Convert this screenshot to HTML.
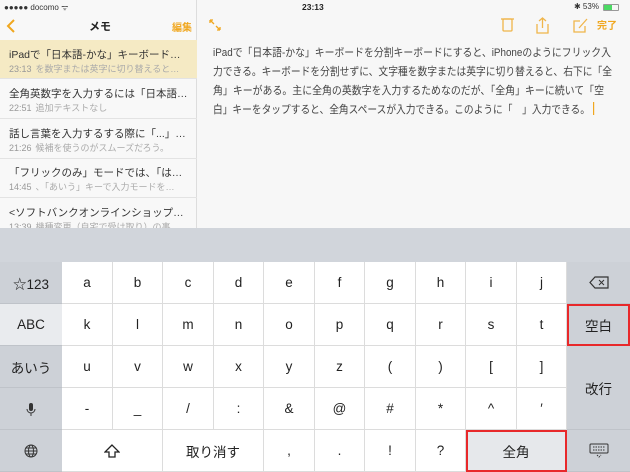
<!DOCTYPE html>
<html><head><meta charset="utf-8"><style>
*{margin:0;padding:0;box-sizing:border-box}
body{width:630px;height:472px;overflow:hidden;background:#f7f7f7;font-family:"Liberation Sans","Noto Sans CJK JP",sans-serif;position:relative;color:#222}
.abs{position:absolute}
.side{left:0;top:0;width:197px;height:228px;background:#f8f8f8;border-right:1px solid #ddd}
.item{position:absolute;left:0;width:197px;height:40px;border-bottom:1px solid #e3e3e3;padding-left:9px}
.item .t{font-size:10.5px;color:#333;position:absolute;top:7px;left:9px;white-space:nowrap}
.item .s{font-size:9px;color:#aaa;position:absolute;top:22px;left:9px;white-space:nowrap}
.item .s b{font-weight:normal;color:#999;margin-right:4px}
.kb{left:0;top:228px;width:630px;height:244px;background:#d1d5db}
.k{position:absolute;background:#fff;border-right:1px solid #dcdcdc;border-bottom:1px solid #dcdcdc;display:flex;align-items:center;justify-content:center;font-size:13.5px;color:#222}
.g{background:#cdd1d7;border-bottom:1px solid #bfc3c9;border-right:none}
.red{outline:2px solid #e8282a;outline-offset:-2px}
.o{color:#f0a71f}
</style></head><body>
<div class="abs side"></div>
<div class="abs" style="left:4px;top:2px;font-size:8px;color:#333">●●●●● docomo ᯤ</div>
<div class="abs" style="left:302px;top:2px;font-size:8.5px;font-weight:bold;color:#222">23:13</div>
<div class="abs" style="left:574px;top:2px;font-size:8px;color:#333">✱ 53%</div>
<div class="abs" style="left:603px;top:4px;width:16px;height:7px;border:1px solid #999;border-radius:1px"><div style="width:8px;height:5px;background:#4cd964"></div></div>
<svg class="abs" style="left:6px;top:18px" width="10" height="16"><path d="M8 2L2 8l6 6" fill="none" stroke="#f0a71f" stroke-width="2"/></svg>
<div class="abs" style="left:89px;top:18px;font-size:11px;font-weight:bold">メモ</div>
<div class="abs o" style="left:172px;top:19px;font-size:10px;font-weight:bold">編集</div>
<div class="item" style="top:40px;height:39px;background:#f5eac4"><div class="t">iPadで「日本語-かな」キーボード…</div><div class="s"><b>23:13</b>を数字または英字に切り替えると…</div></div>
<div class="item" style="top:79px"><div class="t">全角英数字を入力するには「日本語…</div><div class="s"><b>22:51</b>追加テキストなし</div></div>
<div class="item" style="top:119px"><div class="t">話し言葉を入力するする際に「...」…</div><div class="s"><b>21:26</b>候補を使うのがスムーズだろう。</div></div>
<div class="item" style="top:158px"><div class="t">「フリックのみ」モードでは、「は…</div><div class="s"><b>14:45</b>、「あいう」キーで入力モードを…</div></div>
<div class="item" style="top:198px;border:none"><div class="t">&lt;ソフトバンクオンラインショップ…</div><div class="s"><b>13:39</b>機種変更（自宅で受け取り）の事</div></div>
<svg class="abs" style="left:208px;top:18px" width="14" height="14"><g fill="none" stroke="#f0a71f" stroke-width="1.3"><path d="M2 2l4 4M2 2h3M2 2v3M12 12l-4-4M12 12h-3M12 12v-3"/></g></svg>
<svg class="abs" style="left:500px;top:16px" width="120" height="18"><g fill="none" stroke="#f0b54a" stroke-width="1.3"><rect x="3" y="3" width="9" height="12" rx="1"/><line x1="1" y1="3" x2="14" y2="3"/><path d="M37 8v9h11V8M42.5 2v10M39 5l3.5-3 3.5 3"/><path d="M80 5h-6v11h11v-6M79 12l8-9"/></g><text x="97" y="13" font-size="10" font-weight="bold" fill="#f0a71f" font-family="Noto Sans CJK JP">完了</text></svg>
<svg class="abs" style="left:0;top:0" width="630" height="130"><g font-size="11" fill="#444" font-family="Liberation Sans, Noto Sans CJK JP, sans-serif" lengthAdjust="spacingAndGlyphs">
<text x="213" y="56" textLength="398" lengthAdjust="spacingAndGlyphs">iPadで「日本語-かな」キーボードを分割キーボードにすると、iPhoneのようにフリック入</text>
<text x="213" y="75" textLength="399" lengthAdjust="spacingAndGlyphs">力できる。キーボードを分割せずに、文字種を数字または英字に切り替えると、右下に「全</text>
<text x="213" y="94" textLength="391" lengthAdjust="spacingAndGlyphs">角」キーがある。主に全角の英数字を入力するためなのだが、「全角」キーに続いて「空</text>
<text x="213" y="113" textLength="377" lengthAdjust="spacingAndGlyphs">白」キーをタップすると、全角スペースが入力できる。このように「　」入力できる。</text>
</g><rect x="593" y="102" width="1.2" height="13" fill="#f0a71f"/></svg>
<div class="abs kb"></div>
<div id="keys"></div>
<script>
var cols=[62,113,163,214,264,315,365,416,466,517,567];
var rows=[262,304,346,388,430,472];
var L=[["a","b","c","d","e","f","g","h","i","j"],["k","l","m","n","o","p","q","r","s","t"],["u","v","w","x","y","z","(",")","[","]"],["-","_","/",":","&","@","#","*","^","′"]];
var h="";
function k(x,y,w,hh,t,c,st){h+='<div class="k '+(c||'')+'" style="left:'+x+'px;top:'+y+'px;width:'+w+'px;height:'+hh+'px;'+(st||'')+'">'+t+'</div>';}
for(var r=0;r<4;r++)for(var c=0;c<10;c++)k(cols[c],rows[r],cols[c+1]-cols[c],rows[r+1]-rows[r],L[r][c]);
var y=rows[4],hh=42;
k(62,y,101,hh,'<svg width="16" height="14"><path d="M8 1L1 8h4v5h6V8h4z" fill="none" stroke="#222" stroke-width="1.3"/></svg>');
k(163,y,101,hh,'取り消す');
k(264,y,51,hh,',');k(315,y,50,hh,'.');k(365,y,51,hh,'!');k(416,y,50,hh,'?');
k(466,y,101,hh,'全角','red','background:#e6e8eb');
var lt=["☆123","ABC","あいう",'<svg width="10" height="14"><rect x="3" y="1" width="4" height="8" rx="2" fill="#333"/><path d="M1 7a4 4 0 0 0 8 0M5 11v3" stroke="#333" fill="none"/></svg>','<svg width="14" height="14"><g fill="none" stroke="#333"><circle cx="7" cy="7" r="6"/><ellipse cx="7" cy="7" rx="2.5" ry="6"/><path d="M1 7h12M2 4h10M2 10h10"/></g></svg>'];
for(var r=0;r<5;r++)k(0,rows[r],62,rows[r+1]-rows[r],lt[r],'g',r==1?'background:#e9ebee':'');
k(567,rows[0],63,42,'<svg width="20" height="13"><path d="M6 1h13v11H6L1 6.5z" fill="none" stroke="#333" stroke-width="1.2"/><path d="M10 4l5 5M15 4l-5 5" stroke="#333"/></svg>','g');
k(567,rows[1],63,42,'空白','g red');
k(567,rows[2],63,84,'改行','g');
k(567,rows[4],63,42,'<svg width="20" height="16"><rect x="1" y="1" width="18" height="9" rx="1" fill="none" stroke="#333"/><path d="M4 4h12M4 7h12M8 12l2 2 2-2" stroke="#333" fill="none" stroke-dasharray="1.5 1"/></svg>','g');
document.getElementById('keys').innerHTML=h;
</script>
</body></html>
